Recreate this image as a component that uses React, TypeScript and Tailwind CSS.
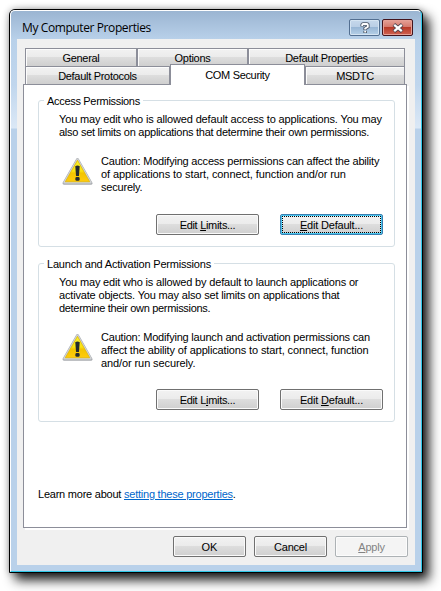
import React from "react";

type LineProps = { children: React.ReactNode; className?: string };

function Line({ children, className = "" }: LineProps) {
  return (
    <div className="flex h-[13px] whitespace-nowrap">
      <span className={className}>{children}</span>
    </div>
  );
}

function Warning() {
  return (
    <svg viewBox="0 0 32 30" className="h-[29px] w-[31px] shrink-0">
      <defs>
        <linearGradient id="warn" x1="0" y1="0" x2="0" y2="1">
          <stop offset="0" stopColor="#f7f230" />
          <stop offset="0.5" stopColor="#fae310" />
          <stop offset="0.6" stopColor="#f3c400" />
          <stop offset="1" stopColor="#ffcb0c" />
        </linearGradient>
      </defs>
      <path d="M16 2.6 30 27.2H2Z" fill="#b4b7bb" stroke="#a9acb0" strokeWidth="3" strokeLinejoin="round" />
      <path d="M16 2.6 29.6 26.4H2.4Z" fill="#d8dadc" stroke="#d0d3d6" strokeWidth="2" strokeLinejoin="round" />
      <path d="M16 3.4 28.6 25.6H3.4Z" fill="url(#warn)" stroke="#e2b600" strokeWidth="0.8" strokeLinejoin="round" />
      <path d="M13.7 9.5Q16 8 18.3 9.5L17.5 19.6H14.5Z" fill="#222a30" />
      <rect x="13.8" y="20.8" width="4.4" height="3.8" rx="1.4" fill="#222a30" />
    </svg>
  );
}

type ButtonProps = {
  children: React.ReactNode;
  kind?: "normal" | "focus" | "disabled";
  className?: string;
};

const buttonKinds = {
  normal:
    "border-[#707070] text-black bg-[linear-gradient(#f2f2f2,#ebebeb_48%,#dddddd_50%,#cfcfcf)] shadow-[inset_0_0_0_1px_#fafafa]",
  focus:
    "border-[#3c7fb1] text-black bg-[linear-gradient(#f2f2f2,#ebebeb_48%,#dddddd_50%,#cfcfcf)] shadow-[inset_0_0_0_1px_#48c8f2]",
  disabled: "border-[#adb2b5] text-[#838383] bg-[#f4f4f4] shadow-[inset_0_0_0_1px_#fcfcfc]",
};

function Button({ children, kind = "normal", className = "" }: ButtonProps) {
  return (
    <button className={`flex h-[21px] rounded-[2px] border p-px ${buttonKinds[kind]} ${className}`}>
      <span
        className={`flex h-full w-full items-center justify-center whitespace-nowrap border border-dotted ${
          kind === "focus" ? "border-black" : "border-transparent"
        }`}
      >
        <span className="pt-px">{children}</span>
      </span>
    </button>
  );
}

function Group({ title, children, className = "" }: { title: React.ReactNode; children: React.ReactNode; className?: string }) {
  return (
    <section className={`w-[357px] rounded-[3px] border border-[#d5dfe5] pl-[5px] ${className}`}>
      <h2 className="-mt-[7px] flex h-[13px] w-fit bg-white px-[3px] pt-px">{title}</h2>
      {children}
    </section>
  );
}

const tab =
  "flex h-[18px] items-center justify-center border border-b-0 border-[#8c8e99] bg-[linear-gradient(#f2f2f2,#ebebeb_48%,#dddddd_50%,#cfcfcf)] pt-[2px] shadow-[inset_1px_1px_0_#fcfcfc] tracking-[-0.3px] whitespace-nowrap";

export default function App() {
  return (
    <div className="h-[591px] w-[441px] overflow-hidden bg-white pl-[9px] pt-[9px] font-['Liberation_Sans',Arial,sans-serif] text-[11px] leading-[13px] text-black">
      <main className="h-[564px] w-[414px] rounded-t-[6px] border border-black bg-[#b9d1ea] bg-[linear-gradient(#9ab4d1,#b9d1ea_30px,#c0d6ed_75px,#dbe8f6_118px,#b9d1ea_119px)] shadow-[6px_7px_12px_0px_rgba(0,0,0,0.9),0_0_7px_rgba(0,0,0,0.3)]">
        <div className="h-full rounded-t-[5px] border border-b-[#30c8e8] border-l-white border-r-[#30c8e8] border-t-white px-[6px]">
          <header className="flex h-[28px] items-start justify-between pl-[5px] pr-[2px]">
            <h1 className="pt-[8px] font-['Open_Sans',sans-serif] text-[12px] leading-[17px] tracking-[-0.4px] whitespace-nowrap">
              My Computer Properties
            </h1>
            <div className="flex gap-[2px] pt-[8px]">
              <button className="flex h-[17px] w-[31px] items-center justify-center rounded-[2px] border border-[#536f91] bg-[linear-gradient(#c6d8eb,#b9cee5_48%,#98b6d5_50%,#b6d0e8)] shadow-[inset_0_0_0_1px_#d5e4f2]">
                <svg viewBox="0 0 10 12" className="h-[12px] w-[10px]" fill="none">
                  <path d="M2.2 4.4V3q0-1 1-1h3.6q1 0 1 1v1.7L5.2 6.4V8M5.2 8.8v2.2" stroke="#4b5665" strokeWidth="3.6" />
                  <path d="M2.2 4V3q0-1 1-1h3.6q1 0 1 1v1.7L5.2 6.4V7.6M5.2 8.8v1.8" stroke="#fff" strokeWidth="1.9" />
                </svg>
              </button>
              <button className="flex h-[17px] w-[31px] items-center justify-center rounded-[2px] border border-[#43131c] bg-[linear-gradient(#e6a297,#d5796d_46%,#b83a28_50%,#cf6252)] shadow-[inset_0_0_0_1px_#e5a096]">
                <svg viewBox="0 0 12 10" className="h-[10px] w-[12px]" fill="none">
                  <path d="M1.8 1.5 10.2 8.5M10.2 1.5 1.8 8.5" stroke="#504650" strokeWidth="4" />
                  <path d="M2.2 1.8 9.8 8.2M9.8 1.8 2.2 8.2" stroke="#fff" strokeWidth="2.3" />
                </svg>
              </button>
            </div>
          </header>
          <div className="h-[526px] w-[398px] bg-[#f0f0f0] pl-[6px] pt-[9px]">
            <nav className="ml-[2px] w-[380px]">
              <div className="flex">
                <div className={`${tab} w-[112px]`}>General</div>
                <div className={`${tab} w-[111px]`}>Options</div>
                <div className={`${tab} w-[157px]`}>Default Properties</div>
              </div>
              <div className="flex">
                <div className={`${tab} w-[145px]`}>Default Protocols</div>
                <div className="z-10 -mt-[2px] -mb-px flex h-[21px] w-[135px] items-center justify-center border border-b-0 border-[#8c8e99] bg-white tracking-[-0.33px] whitespace-nowrap">
                  COM Security
                </div>
                <div className={`${tab} w-[100px]`}>MSDTC</div>
              </div>
            </nav>
            <div className="h-[444px] w-[384px] border border-[#8c8e99] bg-white pl-[14px] pt-[15px] shadow-[2px_2px_0_#fff]">
              <Group title={<span className="tracking-[-0.31px]">Access Permissions</span>} className="h-[147px]">
                <div className="pl-[15px] pt-[6px]">
                  <Line className="tracking-[-0.15px]">You may edit who is allowed default access to applications. You may</Line>
                  <Line className="tracking-[-0.265px]">also set limits on applications that determine their own permissions.</Line>
                </div>
                <div className="flex gap-[8px] pl-[18px] pt-[16px]">
                  <div className="pt-[2px]"><Warning /></div>
                  <div>
                    <Line className="tracking-[-0.2px]">Caution: Modifying access permissions can affect the ability</Line>
                    <Line className="tracking-[-0.085px]">of applications to start, connect, function and/or run</Line>
                    <Line className="tracking-[-0.2px]">securely.</Line>
                  </div>
                </div>
                <div className="flex gap-[21px] pl-[112px] pt-[20px]">
                  <Button className="w-[103px] tracking-[-0.3px]">Edit <u>L</u>imits...</Button>
                  <Button className="w-[103px] tracking-[-0.2px]" kind="focus"><u>E</u>dit Default...</Button>
                </div>
              </Group>
              <Group title={<span className="tracking-[-0.2px]">Launch and Activation Permissions</span>} className="mt-[16px] h-[159px]">
                <div className="pl-[15px] pt-[6px]">
                  <Line className="tracking-[-0.17px]">You may edit who is allowed by default to launch applications or</Line>
                  <Line className="tracking-[-0.17px]">activate objects. You may also set limits on applications that</Line>
                  <Line className="tracking-[-0.32px]">determine their own permissions.</Line>
                </div>
                <div className="flex gap-[8px] pl-[18px] pt-[16px]">
                  <div className="pt-[2px]"><Warning /></div>
                  <div>
                    <Line className="tracking-[-0.2px]">Caution: Modifying launch and activation permissions can</Line>
                    <Line className="tracking-[-0.13px]">affect the ability of applications to start, connect, function</Line>
                    <Line className="tracking-[-0.1px]">and/or run securely.</Line>
                  </div>
                </div>
                <div className="flex gap-[21px] pl-[112px] pt-[19px]">
                  <Button className="w-[103px] tracking-[-0.3px]">Edit L<u>i</u>mits...</Button>
                  <Button className="w-[103px] tracking-[-0.2px]">Edit <u>D</u>efault...</Button>
                </div>
              </Group>
              <p className="mt-[66px] tracking-[-0.23px] whitespace-nowrap">
                Learn more about <a className="text-[#0066cc] underline">setting these properties</a>.
              </p>
            </div>
            <footer className="flex gap-[8px] pl-[150px] pt-[8px]">
              <Button className="w-[73px]">OK</Button>
              <Button className="w-[73px] tracking-[-0.2px]">Cancel</Button>
              <Button className="w-[73px] tracking-[-0.2px]" kind="disabled"><u>A</u>pply</Button>
            </footer>
          </div>
        </div>
      </main>
    </div>
  );
}
